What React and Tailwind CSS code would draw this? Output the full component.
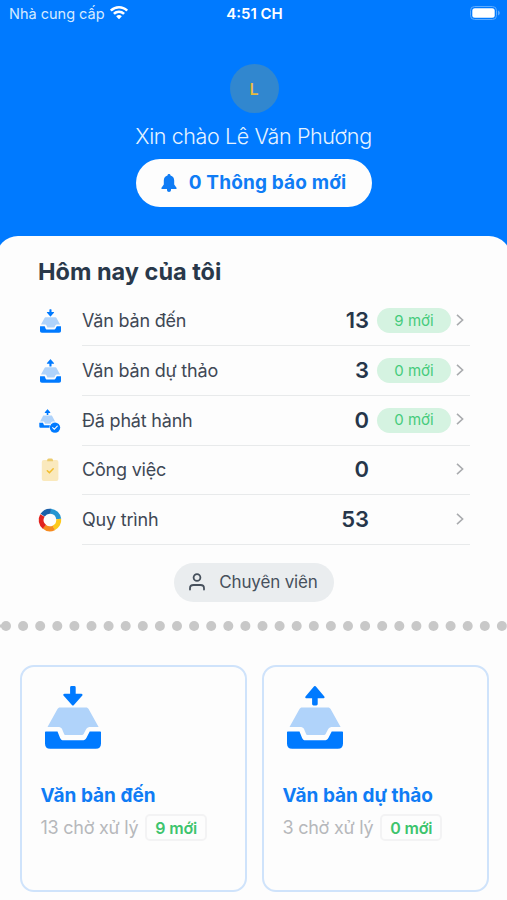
import React from 'react';

const cards = [
  { title: 'Văn bản đến', pending: 13, fresh: 9, direction: 'down' },
  { title: 'Văn bản dự thảo', pending: 3, fresh: 0, direction: 'up' },
];

const rows = [
  { label: 'Văn bản đến', count: 13, fresh: 9, icon: <TrayIcon direction="down" className="w-[21px] h-[24px]" /> },
  { label: 'Văn bản dự thảo', count: 3, fresh: 0, icon: <TrayIcon direction="up" className="w-[21px] h-[24px]" /> },
  { label: 'Đã phát hành', count: 0, fresh: 0, icon: <PublishedIcon /> },
  { label: 'Công việc', count: 0, icon: <ClipboardIcon /> },
  { label: 'Quy trình', count: 53, icon: <ProcessIcon /> },
];

function TrayShape({ direction }) {
  return (
    <>
      {direction === 'down' ? (
        <path
          d="M26.500 0h2.800a1.400 1.400 0 0 1 1.400 1.400V7.700h5.500c1.300 0 1.800 1.200.9 2.100l-8.200 9.200c-.6.7-1.400.7-2 0L18.700 9.800c-.9-.9-.4-2.100.9-2.100h5.500V1.400A1.400 1.400 0 0 1 26.500 0z"
          fill="#007aff"
        />
      ) : (
        <path
          d="M26.500 19.500h2.800a1.400 1.400 0 0 0 1.400-1.400V12.300h5.500c1.300 0 1.800-1.200.9-2.100L28.900.5c-.6-.7-1.400-.7-2 0L18.700 10.200c-.9.9-.4 2.100.9 2.100h5.500v5.800a1.400 1.400 0 0 0 1.400 1.400z"
          fill="#007aff"
        />
      )}
      <path
        d="M15 21.400h26c1.300 0 2 .5 2.600 1.600L53.600 41H46c-2.500 0-4 .6-4.900 2.300L38.600 48c-.5.8-1 1.100-2 1.100H21c-1 0-1.500-.4-1.900-1.200L17 43c-.8-1.600-2-2-4.500-2H2.500l10-18c.6-1.100 1.200-1.600 2.500-1.600z"
        fill="#b0d3fa"
      />
      <path
        d="M1 45.600h11.500L14.900 51.500c.8 2 1.800 2.800 3.900 2.800h18.400c2.100 0 3.300-.7 4.300-2.600l3.200-6.100H55c.6 0 1 .4 1 1v11c0 3.500-1.700 5.200-5.200 5.200H5.200C1.700 62.800 0 61.100 0 57.600v-11c0-.6.4-1 1-1z"
        fill="#007aff"
      />
    </>
  );
}

function TrayIcon({ direction, className }) {
  return (
    <svg viewBox="0 0 56 63" className={className}>
      <TrayShape direction={direction} />
    </svg>
  );
}

function PublishedIcon() {
  return (
    <svg viewBox="0 0 22 24" className="w-[22px] h-[24px]">
      <g transform="translate(0.300 0.300) scale(0.295)">
        <TrayShape direction="up" />
      </g>
      <circle cx="16" cy="18.600" r="5.600" fill="#fdfdfd" />
      <circle cx="16" cy="18.600" r="5.200" fill="#007aff" />
      <path d="M13.700 18.700l1.600 1.600 3-3.200" fill="none" stroke="#fff" strokeWidth="1.100" strokeLinecap="round" />
    </svg>
  );
}

function ClipboardIcon() {
  return (
    <svg viewBox="0 0 18 24" className="w-[18px] h-[24px]">
      <rect x="0.800" y="2" width="16.600" height="21" rx="2" fill="#fae9bd" />
      <path d="M6.200 1.700A2 2 0 0 1 7.800.6h2.600a2 2 0 0 1 1.600 1.100v1.500H6.200z" fill="#eccb6d" />
      <path d="M6.300 12.700l2.100 2 3.800-4" fill="none" stroke="#f2bd2c" strokeWidth="1.500" strokeLinecap="round" />
    </svg>
  );
}

function ProcessIcon() {
  return (
    <svg viewBox="0 0 24 24" className="w-[24px] h-[24px]" fill="none" strokeWidth="5">
      <path d="M4.600 7.200A8.800 8.800 0 0 1 13 3.300" stroke="#1c5fa8" />
      <path d="M12.500 3.200A8.800 8.800 0 0 1 20.700 11" stroke="#2596d1" />
      <path d="M20.700 11A8.800 8.800 0 0 1 15.600 20" stroke="#fcc91b" />
      <path d="M15.800 19.900A8.800 8.800 0 0 1 6.200 18.600" stroke="#f68b1f" />
      <path d="M6.400 18.800A8.800 8.800 0 0 1 4.400 7.500" stroke="#e2231f" />
    </svg>
  );
}

function StatusBar() {
  return (
    <div className="grid grid-cols-3 items-center h-[28px] pl-[9px] pr-[7px] text-[15px] text-white">
      <div className="flex items-center gap-[5px] text-[#d6eaff]">
        <span className="text-[14.5px] whitespace-nowrap">Nhà cung cấp</span>
        <svg viewBox="0 0 18 14" className="w-[18px] h-[14px] mb-[2px]" fill="#fff">
          <path d="M9 0C5.600 0 2.500 1.300.2 3.500a.4.4 0 0 0 0 .6l1.200 1.200c.2.200.4.200.6 0A10 10 0 0 1 9 2.500c2.700 0 5.100 1 7 2.800.2.200.4.200.6 0l1.200-1.200a.4.4 0 0 0 0-.6A12.800 12.800 0 0 0 9 0z" />
          <path d="M9 4.500c-2.200 0-4.200.8-5.700 2.200a.4.4 0 0 0 0 .6l1.200 1.200c.2.200.4.200.6 0a5.800 5.800 0 0 1 7.800 0c.2.200.4.200.6 0l1.200-1.200a.4.4 0 0 0 0-.6A8.400 8.400 0 0 0 9 4.500z" />
          <path d="M9 9c-1 0-1.900.4-2.600 1a.4.4 0 0 0 0 .6l2.300 2.300c.2.200.4.200.6 0l2.300-2.300a.4.4 0 0 0 0-.6A3.900 3.900 0 0 0 9 9z" />
        </svg>
      </div>
      <span className="text-center font-semibold whitespace-nowrap">4:51 CH</span>
      <svg viewBox="0 0 30 14" className="w-[30px] h-[14px] mb-[2px] justify-self-end">
        <rect x="0.500" y="0.500" width="26" height="13" rx="4" fill="none" stroke="#5cabff" />
        <rect x="2.300" y="2.300" width="22.400" height="9.400" rx="2.500" fill="#fff" />
        <path d="M28 4.500c1.100.4 1.800 1.400 1.800 2.500S29.100 9.100 28 9.500z" fill="#5cabff" />
      </svg>
    </div>
  );
}

function SummaryRow({ icon, label, count, fresh }) {
  return (
    <div className="flex h-[49.7px]">
      <div className="w-[44px] flex items-center">
        <div className="w-[24px] flex justify-center">{icon}</div>
      </div>
      <div className="flex-1 flex items-center border-b border-[#e8eaeb] pr-[6px]">
        <span className="flex-1 text-[18px] tracking-[-0.2px] text-[#3f4855]">{label}</span>
        <span className="text-[22px] font-semibold text-[#26364a]">{count}</span>
        <div className="w-[82px] pl-[8px]">
          {fresh !== undefined && (
            <div className="h-[25px] w-[74px] pt-px rounded-full bg-[#d5f3e1] text-[#46cb7c] text-[15px] flex items-center justify-center">
              {fresh} mới
            </div>
          )}
        </div>
        <svg viewBox="0 0 8 12" className="w-[8px] h-[12px] ml-[5px] mb-[2px]">
          <path d="M1 0.800l5.600 5.200L1 11.200" fill="none" stroke="#a9abae" strokeWidth="1.600" />
        </svg>
      </div>
    </div>
  );
}

function DocumentCard({ title, pending, fresh, direction }) {
  return (
    <div className="flex-1 h-[227px] rounded-[14px] border-2 border-[#cfe3fb] pl-[19px] pt-[19px]">
      <TrayIcon direction={direction} className="w-[56px] h-[63px] ml-[4px]" />
      <h3 className="mt-[33px] text-[19px] leading-[28px] font-bold text-[#0f7cf5]">{title}</h3>
      <div className="flex items-center gap-[7px] mt-[4px]">
        <span className="text-[18px] tracking-[-0.25px] text-[#b6b8bb] whitespace-nowrap">{pending} chờ xử lý</span>
        <span className="h-[27px] px-[8px] rounded-[5px] border-2 border-[#f3f3f4] flex items-center text-[16px] tracking-[-0.2px] font-semibold text-[#3ec46d] whitespace-nowrap">
          {fresh} mới
        </span>
      </div>
    </div>
  );
}

export default function App() {
  return (
    <div className="w-full h-[900px] overflow-hidden bg-[#007aff] font-['Inter','Liberation_Sans',sans-serif]">
      <StatusBar />

      {/* Greeting */}
      <div className="h-[208px] pt-[36px] flex flex-col items-center">
        <div className="h-[49px] w-[49px] ml-px rounded-full bg-[#3187cf] flex items-center justify-center text-[16px] font-semibold text-[#e5bb3c]">
          L
        </div>
        <p className="mt-[8px] text-[21.5px] leading-[30px] tracking-[-0.38px] font-light text-[#e6f3ff] whitespace-nowrap">Xin chào Lê Văn Phương</p>
        <button className="mt-[8px] h-[48px] w-[236px] rounded-full bg-[#fdfdfd] flex items-center justify-center gap-[12px] text-[19px] tracking-[0.15px] font-bold text-[#0f7cf5] whitespace-nowrap">
          <svg viewBox="0 0 16 18" className="w-[16px] h-[18px]" fill="#0f7cf5">
            <path d="M8 0c.9 0 1.500.6 1.500 1.400 2.400.7 3.700 2.500 3.700 5v4.200l2.300 3.200c.5.700.2 1.200-.6 1.200H1.100c-.8 0-1.100-.5-.6-1.200l2.300-3.200V6.400c0-2.500 1.300-4.300 3.700-5C6.500.6 7.100 0 8 0z" />
            <path d="M6 15h4v1c0 1.200-.9 1.900-2 1.900S6 17.200 6 16z" />
          </svg>
          <span>0 Thông báo mới</span>
        </button>
      </div>

      {/* Today summary */}
      <div className="h-[664px] -mx-[4px] px-[4px] rounded-t-[22px] bg-[#fdfdfd]">
        <div className="pl-[38px] pr-[37px] pt-[19px]">
          <h2 className="h-[41.5px] text-[23.5px] leading-[33px] font-bold text-[#29384a]">Hôm nay của tôi</h2>
          {rows.map((row) => (
            <SummaryRow key={row.label} {...row} />
          ))}
        </div>

        <div className="flex justify-center mt-[18px]">
          <button className="h-[39px] w-[160px] rounded-full bg-[#eaedef] flex items-center justify-center gap-[14px] text-[17px] tracking-[-0.15px] text-[#46505c] whitespace-nowrap">
            <svg viewBox="0 0 16 18" className="w-[16px] h-[18px]" fill="none" stroke="#46505c" strokeWidth="1.800" strokeLinecap="round">
              <circle cx="8" cy="4.500" r="3.400" />
              <path d="M1 16.500v-1.200c0-2 1.500-3.300 3.500-3.300h7c2 0 3.500 1.300 3.500 3.300v1.200" />
            </svg>
            <span>Chuyên viên</span>
          </button>
        </div>

        {/* Dotted divider */}
        <svg viewBox="0 0 507 12" className="w-[507px] h-[12px] mt-[18.500px]" fill="#c8c8c8">
          <rect x="0" y="4.500" width="2" height="3" />
          {Array.from({ length: 30 }, (_, i) => (
            <circle key={i} cx={6 + i * 17.1} cy="6" r="5" />
          ))}
        </svg>

        <div className="flex gap-[15px] mt-[33px] pl-[19.500px] pr-[18.500px]">
          {cards.map((card) => (
            <DocumentCard key={card.title} {...card} />
          ))}
        </div>
      </div>
    </div>
  );
}
